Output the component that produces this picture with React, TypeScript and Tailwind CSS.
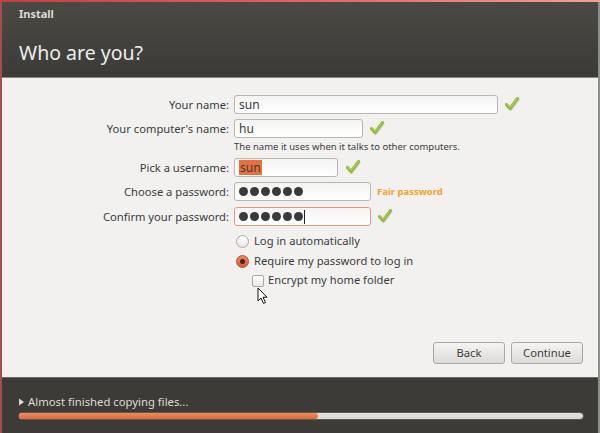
import React from "react";

const Check = () => (
  <svg width="16" height="16" viewBox="0 0 16 16" className="shrink-0">
    <path d="M2.5 8.5 L6 12.5 L13.5 2.5" fill="none" stroke="#d4d2cc" strokeWidth="3.2" strokeLinecap="round" strokeLinejoin="round" transform="translate(0.6,1)" />
    <path d="M2.5 8.5 L6 12.5 L13.5 2.5" fill="none" stroke="#8fb83a" strokeWidth="3" strokeLinecap="round" strokeLinejoin="round" />
    <path d="M3 8.3 L6 11.6 L13 2.6" fill="none" stroke="#b6d85c" strokeWidth="1" strokeLinecap="round" strokeLinejoin="round" />
  </svg>
);

const Dots = () => (
  <span className="flex gap-[2px] items-center">
    {[0, 1, 2, 3, 4, 5].map((i) => (
      <span key={i} className="w-[9px] h-[9px] rounded-full bg-[#3a3a3a] inline-block" />
    ))}
  </span>
);

const inputBase =
  "h-[19px] rounded-[3px] border bg-gradient-to-b from-[#f4f4f3] to-white flex items-center px-[4px] text-[12px] text-[#3c3c3c]";

const label = "w-[232px] text-right pr-[5px] leading-[19px]";

export default function App() {
  return (
    <div
      className="w-[600px] h-[433px] flex flex-col overflow-hidden bg-[#3c3b37]"
      style={{ fontFamily: "'Noto Sans', 'Open Sans', sans-serif" }}
    >
      <div className="h-[2px] bg-gradient-to-r from-[#c4413a] via-[#e0645a] to-[#f2a090]" />
      <div className="flex-1 flex border-l-[2px] border-l-[#a84a4e] border-r-[2px] border-r-[#8e8e8a] flex-col">
        {/* header */}
        <div className="h-[76px] bg-gradient-to-b from-[#4a4944] to-[#3c3b37] flex flex-col px-[17px] border-b border-b-[#8a8984]">
          <div className="text-[11px] font-bold text-[#dfdbd2] mt-[5px] leading-[14px]">Install</div>
          <div className="text-[19.5px] text-[#eeeeec] mt-[19px] leading-[26px]">Who are you?</div>
        </div>
        {/* content */}
        <div className="h-[299px] bg-[#f2f1f0] flex flex-col text-[11.2px] text-[#3c3c3c]">
          <div className="flex flex-col mt-[17px]">
            <div className="h-[24px] flex items-start">
              <div className={label}>Your name:</div>
              <div className={inputBase + " w-[264px] border-[#b8b7b2]"}>sun</div>
              <div className="ml-[6px] mt-[1px]"><Check /></div>
            </div>
            <div className="h-[22px] flex items-start">
              <div className={label}>Your computer's name:</div>
              <div className={inputBase + " w-[129px] border-[#b8b7b2]"}>hu</div>
              <div className="ml-[6px] mt-[1px]"><Check /></div>
            </div>
            <div className="h-[17px] flex">
              <div className="w-[232px]" />
              <div className="text-[9.5px] leading-[12px] text-[#3c3c3c]">The name it uses when it talks to other computers.</div>
            </div>
            <div className="h-[24px] flex items-start">
              <div className={label}>Pick a username:</div>
              <div className={inputBase + " w-[104px] border-[#b8b7b2] px-[3px]"}>
                <span className="bg-[#e9703d] text-[#3c3c3c] leading-[15px] px-[1px]">sun</span>
              </div>
              <div className="ml-[7px] mt-[1px]"><Check /></div>
            </div>
            <div className="h-[25px] flex items-start">
              <div className={label}>Choose a password:</div>
              <div className={inputBase + " w-[137px] border-[#b8b7b2] px-[4px]"}><Dots /></div>
              <div className="ml-[6px] text-[9.5px] font-bold text-[#f3a12a] leading-[19px]">Fair password</div>
            </div>
            <div className="h-[24px] flex items-start">
              <div className={label}>Confirm your password:</div>
              <div className={inputBase + " w-[137px] border-[#e9967a] px-[4px]"}>
                <Dots />
                <span className="w-[1px] h-[14px] bg-[#222] ml-[1px]" />
              </div>
              <div className="ml-[6px] mt-[1px]"><Check /></div>
            </div>
            <div className="flex flex-col pl-[234px]">
              <div className="h-[20px] flex items-center gap-[5px]">
                <span className="w-[13px] h-[13px] rounded-full border border-[#a9a8a3] bg-gradient-to-b from-white to-[#e9e8e6]" />
                <span>Log in automatically</span>
              </div>
              <div className="h-[20px] flex items-center gap-[5px]">
                <span className="w-[13px] h-[13px] rounded-full border border-[#b0503a] bg-gradient-to-b from-[#f08860] to-[#dd5a2a] flex items-center justify-center">
                  <span className="w-[5px] h-[5px] rounded-full bg-[#4a2418]" />
                </span>
                <span>Require my password to log in</span>
              </div>
              <div className="h-[19px] flex items-center gap-[4px] pl-[16px] relative">
                <span className="w-[12px] h-[12px] rounded-[2px] border border-[#a9a8a3] bg-gradient-to-b from-white to-[#e9e8e6]" />
                <span>Encrypt my home folder</span>
                <svg width="12" height="18" viewBox="0 0 12 18" className="absolute left-[21px] top-[16px]">
                  <path d="M1 1 L1 14 L4 11 L6.5 16.5 L8.5 15.5 L6 10.2 L10 10.2 Z" fill="#fff" stroke="#111" strokeWidth="1" strokeLinejoin="round" />
                </svg>
              </div>
            </div>
          </div>
          <div className="flex-1" />
          <div className="flex justify-end gap-[6px] pr-[15px] mb-[13px]">
            <div className="w-[72px] h-[22px] rounded-[3px] border border-[#a9a8a3] bg-gradient-to-b from-[#f5f4f3] to-[#dcdbd8] flex items-center justify-center text-[#3c3c3c]">Back</div>
            <div className="w-[72px] h-[22px] rounded-[3px] border border-[#a9a8a3] bg-gradient-to-b from-[#f5f4f3] to-[#dcdbd8] flex items-center justify-center text-[#3c3c3c]">Continue</div>
          </div>
        </div>
        {/* footer */}
        <div className="flex-1 bg-[#3c3b37] border-t border-t-[#6a6965] flex flex-col px-[16px] pt-[17px]">
          <div className="flex items-center gap-[3px] text-[11.3px] text-[#dfdbd2] leading-[14px]">
            <svg width="7" height="8" viewBox="0 0 7 8"><path d="M1 0.5 L6 4 L1 7.5 Z" fill="#dfdbd2" /></svg>
            <span>Almost finished copying files...</span>
          </div>
          <div className="mt-[3px] h-[8px] w-[566px] rounded-full bg-gradient-to-b from-[#e4e3e0] to-[#d8d7d4] border border-[#5a5955] overflow-hidden">
            <div className="h-full bg-gradient-to-b from-[#f08a5a] to-[#e06a35] rounded-full" style={{ width: "53%" }} />
          </div>
        </div>
      </div>
    </div>
  );
}
